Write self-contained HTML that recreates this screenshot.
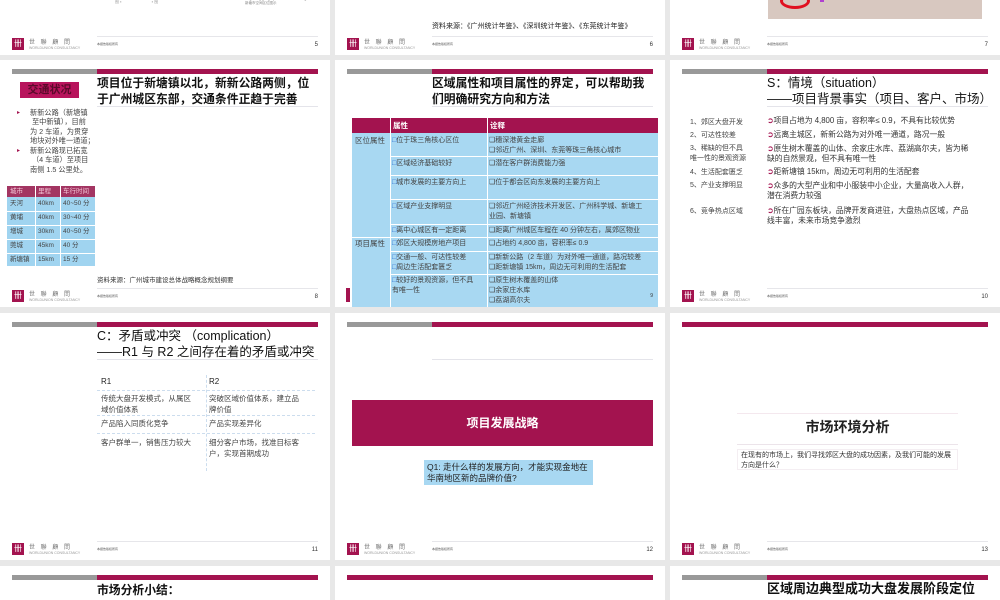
<!DOCTYPE html>
<html><head><meta charset="utf-8"><style>
*{margin:0;padding:0;box-sizing:border-box}
html{width:1000px;height:600px;overflow:hidden}
body{width:1000px;height:600px;background:#e8e8e8;position:relative;overflow:hidden;font-family:"Liberation Sans","Noto Sans CJK SC",sans-serif;color:#222}
.s{position:absolute;width:330px;height:247px;background:#fff;overflow:hidden}
.s>*{position:absolute}
.g{left:12px;top:9px;width:85px;height:5px;background:#999}
.m{left:97px;top:9px;width:221px;height:5px;background:#a3134f}
.mf{left:12px;top:9px;width:306px;height:5px;background:#a3134f}
.t{left:97px;top:15px;font-size:11.8px;font-weight:bold;line-height:16px;white-space:nowrap;color:#111}
.ul{left:97px;top:46px;width:221px;height:1px;background:#e4e4ea}
.fl{left:97px;top:228px;width:221px;height:1px;background:#e6e6ea}
.lg{left:12px;top:230px;width:12px;height:12px;background:#a3134f;color:#fff;font-size:8px;line-height:12px;text-align:center}
.lt{left:29px;top:229px;font-size:6px;color:#777;letter-spacing:2px;white-space:nowrap}
.lt2{left:29px;top:238px;font-size:3.5px;color:#999;white-space:nowrap}
.ft{left:97px;top:234px;font-size:3px;color:#555}
.pn{right:12px;top:234px;font-size:6px;color:#333}
.sm{font-size:7.5px;line-height:10px;white-space:nowrap}
</style></head><body>

<!-- row 1 -->
<div class="s" style="left:0;top:-192px">
<div class="sm" style="left:115px;top:189px;font-size:4px;color:#999">图 ▪ 　　　　　　　 ▪ 图</div>
<div style="left:245px;top:189px;font-size:3.5px;color:#888;line-height:4px">Jingcheng geographical schematic diagram<br>新塘市空间区位图示</div>
<div class="fl"></div><div class="lg">卌</div><div class="lt">世 聯 顧 問</div><div class="lt2">WORLDUNION CONSULTANCY</div><div class="ft">本报告版权所有</div><div class="pn">5</div>
</div>
<div class="s" style="left:335px;top:-192px">
<div class="sm" style="left:97px;top:214px;font-size:7px">资料来源：《广州统计年鉴》、《深圳统计年鉴》、《东莞统计年鉴》</div>
<div class="fl"></div><div class="lg">卌</div><div class="lt">世 聯 顧 問</div><div class="lt2">WORLDUNION CONSULTANCY</div><div class="ft">本报告版权所有</div><div class="pn">6</div>
</div>
<div class="s" style="left:670px;top:-192px">
<div style="left:98px;top:172px;width:214px;height:39px;background:#d8c8c0"></div>
<div style="left:110px;top:185px;width:30px;height:16px;border:3px solid #e01020;border-radius:50%"></div>
<div style="left:150px;top:180px;width:4px;height:14px;background:#b040d0"></div>
<div class="fl"></div><div class="lg">卌</div><div class="lt">世 聯 顧 問</div><div class="lt2">WORLDUNION CONSULTANCY</div><div class="ft">本报告版权所有</div><div class="pn">7</div>
</div>

<!-- row 2 -->
<div class="s" style="left:0;top:60px">
<div class="g"></div><div class="m"></div>
<div class="t">项目位于新塘镇以北，新新公路两侧，位<br>于广州城区东部，交通条件正趋于完善</div>
<div class="ul"></div>
<div style="left:20px;top:22px;width:59px;height:16px;background:#b8145c;color:#5a0a2a;font-size:11px;font-weight:bold;text-align:center;line-height:16px">交通状况</div>
<div style="left:17px;top:49px;font-size:6px;color:#a3134f">▸</div>
<div style="left:17px;top:87px;font-size:6px;color:#a3134f">▸</div>
<div style="left:30px;top:48px;font-size:7.2px;line-height:9.3px;color:#444;white-space:nowrap">新新公路（新塘镇<br>&nbsp;至中新镇），目前<br>为 2 车道，为贯穿<br>地块对外唯一通道；</div>
<div style="left:30px;top:86px;font-size:7.2px;line-height:9.3px;color:#444;white-space:nowrap">新新公路现已拓宽<br>&nbsp;（4 车道）至项目<br>南侧 1.5 公里处。</div>
<div style="left:7px;top:126px;width:88px;height:80px;background:#a0d4f0"></div>
<div style="left:7px;top:126px;width:88px;height:11px;background:#a33562"></div>
<div style="left:35px;top:126px;width:1px;height:80px;background:#fff"></div>
<div style="left:60px;top:126px;width:1px;height:80px;background:#fff"></div>
<div style="left:7px;top:151px;width:88px;height:1px;background:#fff"></div>
<div style="left:7px;top:165px;width:88px;height:1px;background:#fff"></div>
<div style="left:7px;top:179px;width:88px;height:1px;background:#fff"></div>
<div style="left:7px;top:193px;width:88px;height:1px;background:#fff"></div>
<div style="left:10px;top:127px;font-size:6.5px;line-height:14px;color:#444"><span style="color:#f4c8d8;line-height:10px;display:block">城市</span>天河<br>黄埔<br>增城<br>莞城<br>新塘镇</div>
<div style="left:38px;top:127px;font-size:6.5px;line-height:14px;color:#444"><span style="color:#f4c8d8;line-height:10px;display:block">里程</span>40km<br>40km<br>30km<br>45km<br>15km</div>
<div style="left:63px;top:127px;font-size:6.5px;line-height:14px;color:#444"><span style="color:#f4c8d8;line-height:10px;display:block">车行时间</span>40~50 分<br>30~40 分<br>40~50 分<br>40 分<br>15 分</div>
<div class="sm" style="left:97px;top:216px;font-size:6.5px;color:#333">资料来源：广州城市建设总体战略概念规划纲要</div>
<div class="fl"></div><div class="lg">卌</div><div class="lt">世 聯 顧 問</div><div class="lt2">WORLDUNION CONSULTANCY</div><div class="ft">本报告版权所有</div><div class="pn">8</div>
</div>

<div class="s" style="left:335px;top:60px">
<div class="g"></div><div class="m"></div>
<div class="t">区域属性和项目属性的界定，可以帮助我<br>们明确研究方向和方法</div>
<div class="ul"></div>
<div style="left:11px;top:228px;width:4px;height:14px;background:#a3134f"></div>
<div style="left:17px;top:58px;width:306px;height:189px;background:#a8d8f2"></div>
<div style="left:17px;top:58px;width:306px;height:15px;background:#a3134f"></div>
<div style="left:55px;top:58px;width:1px;height:189px;background:#fff"></div>
<div style="left:152px;top:58px;width:1px;height:189px;background:#fff"></div>
<div style="left:17px;top:177px;width:306px;height:1px;background:#fff"></div>
<div style="left:55px;top:96px;width:268px;height:1px;background:#fff"></div>
<div style="left:55px;top:115px;width:268px;height:1px;background:#fff"></div>
<div style="left:55px;top:139px;width:268px;height:1px;background:#fff"></div>
<div style="left:55px;top:164px;width:268px;height:1px;background:#fff"></div>
<div style="left:55px;top:191px;width:268px;height:1px;background:#fff"></div>
<div style="left:55px;top:214px;width:268px;height:1px;background:#fff"></div>
<div class="sm" style="left:58px;top:61px;color:#fff;font-weight:bold">属性</div>
<div class="sm" style="left:155px;top:61px;color:#fff;font-weight:bold">诠释</div>
<div class="sm" style="left:20px;top:76px;color:#444">区位属性</div>
<div class="sm" style="left:20px;top:179px;color:#444">项目属性</div>
<div class="sm" style="left:57px;top:76px;color:#444;font-size:7px"><span style="color:#2060d0">□</span>位于珠三角核心区位</div>
<div class="sm" style="left:57px;top:99px;color:#444;font-size:7px"><span style="color:#2060d0">□</span>区域经济基础较好</div>
<div class="sm" style="left:57px;top:118px;color:#444;font-size:7px"><span style="color:#2060d0">□</span>城市发展的主要方向上</div>
<div class="sm" style="left:57px;top:142px;color:#444;font-size:7px"><span style="color:#2060d0">□</span>区域产业支撑明显</div>
<div class="sm" style="left:57px;top:166px;color:#444;font-size:7px"><span style="color:#2060d0">□</span>离中心城区有一定距离</div>
<div class="sm" style="left:57px;top:179px;color:#444;font-size:7px"><span style="color:#2060d0">□</span>郊区大规模房地产项目</div>
<div class="sm" style="left:57px;top:193px;color:#444;font-size:7px"><span style="color:#2060d0">□</span>交通一般、可达性较差<br><span style="color:#2060d0">□</span>周边生活配套匮乏</div>
<div class="sm" style="left:57px;top:216px;color:#444;font-size:7px"><span style="color:#2060d0">□</span>较好的景观资源，但不具<br>有唯一性</div>
<div class="sm" style="left:154px;top:76px;color:#444;font-size:7px">❑穗深港黄金走廊<br>❑邻近广州、深圳、东莞等珠三角核心城市</div>
<div class="sm" style="left:154px;top:99px;color:#444;font-size:7px">❑潜在客户群消费能力强</div>
<div class="sm" style="left:154px;top:118px;color:#444;font-size:7px">❑位于都会区向东发展的主要方向上</div>
<div class="sm" style="left:154px;top:142px;color:#444;font-size:7px">❑邻近广州经济技术开发区、广州科学城、新塘工<br>业园、新塘镇</div>
<div class="sm" style="left:154px;top:166px;color:#444;font-size:7px">❑距离广州城区车程在 40 分钟左右，属郊区物业</div>
<div class="sm" style="left:154px;top:179px;color:#444;font-size:7px">❑占地约 4,800 亩，容积率≤ 0.9</div>
<div class="sm" style="left:154px;top:193px;color:#444;font-size:7px">❑新新公路（2 车道）为对外唯一通道，路况较差<br>❑距新塘镇 15km，周边无可利用的生活配套</div>
<div class="sm" style="left:154px;top:216px;color:#444;font-size:7px">❑原生树木覆盖的山体<br>❑余家庄水库<br>❑荔湖高尔夫</div>
<div class="pn" style="top:233px;font-size:5px">9</div>
</div>

<div class="s" style="left:670px;top:60px">
<div class="g"></div><div class="m"></div>
<div class="t" style="font-weight:normal;font-size:12.5px">S：情境（situation）<br>——项目背景事实（项目、客户、市场）</div>
<div class="ul"></div>
<div style="left:20px;top:58px;font-size:7px;color:#444;line-height:10px;white-space:nowrap">1、郊区大盘开发</div>
<div style="left:20px;top:71px;font-size:7px;color:#444;line-height:10px;white-space:nowrap">2、可达性较差</div>
<div style="left:20px;top:84px;font-size:7px;color:#444;line-height:10px;white-space:nowrap">3、稀缺的但不具<br>唯一性的景观资源</div>
<div style="left:20px;top:108px;font-size:7px;color:#444;line-height:10px;white-space:nowrap">4、生活配套匮乏</div>
<div style="left:20px;top:121px;font-size:7px;color:#444;line-height:10px;white-space:nowrap">5、产业支撑明显</div>
<div style="left:20px;top:147px;font-size:7px;color:#444;line-height:10px;white-space:nowrap">6、竞争热点区域</div>
<div class="sm" style="left:97px;top:56px;color:#333;font-size:7.8px"><span style="color:#a3134f">➲</span>项目占地为 4,800 亩，容积率≤ 0.9，不具有比较优势</div>
<div class="sm" style="left:97px;top:70px;color:#333;font-size:7.8px"><span style="color:#a3134f">➲</span>远离主城区，新新公路为对外唯一通道，路况一般</div>
<div class="sm" style="left:97px;top:84px;color:#333;font-size:7.8px"><span style="color:#a3134f">➲</span>原生树木覆盖的山体、余家庄水库、荔湖高尔夫，皆为稀<br>缺的自然景观，但不具有唯一性</div>
<div class="sm" style="left:97px;top:107px;color:#333;font-size:7.8px"><span style="color:#a3134f">➲</span>距新塘镇 15km，周边无可利用的生活配套</div>
<div class="sm" style="left:97px;top:121px;color:#333;font-size:7.8px"><span style="color:#a3134f">➲</span>众多的大型产业和中小服装中小企业，大量高收入人群，<br>潜在消费力较强</div>
<div class="sm" style="left:97px;top:146px;color:#333;font-size:7.8px"><span style="color:#a3134f">➲</span>所在广园东板块，品牌开发商进驻，大盘热点区域，产品<br>线丰富，未来市场竞争激烈</div>
<div class="fl"></div><div class="lg">卌</div><div class="lt">世 聯 顧 問</div><div class="lt2">WORLDUNION CONSULTANCY</div><div class="ft">本报告版权所有</div><div class="pn">10</div>
</div>

<!-- row 3 -->
<div class="s" style="left:0;top:313px">
<div class="g"></div><div class="m"></div>
<div class="t" style="font-weight:normal;font-size:12.5px">C：矛盾或冲突 （complication）<br>——R1 与 R2 之间存在着的矛盾或冲突</div>
<div class="ul"></div>
<div style="left:206px;top:62px;width:0;height:96px;border-left:1px dashed #cde"></div>
<div style="left:97px;top:77px;width:218px;border-top:1px dashed #cde"></div>
<div style="left:97px;top:102px;width:218px;border-top:1px dashed #cde"></div>
<div style="left:97px;top:120px;width:218px;border-top:1px dashed #cde"></div>
<div class="sm" style="left:101px;top:64px;font-size:8px;color:#222">R1</div>
<div class="sm" style="left:209px;top:64px;font-size:8px;color:#222">R2</div>
<div class="sm" style="left:101px;top:80px;color:#444;line-height:11px">传统大盘开发模式，从属区<br>域价值体系</div>
<div class="sm" style="left:209px;top:80px;color:#444;line-height:11px">突破区域价值体系，建立品<br>牌价值</div>
<div class="sm" style="left:101px;top:106px;color:#444">产品陷入同质化竞争</div>
<div class="sm" style="left:209px;top:106px;color:#444">产品实现差异化</div>
<div class="sm" style="left:101px;top:124px;color:#444;line-height:11px">客户群单一，销售压力较大</div>
<div class="sm" style="left:209px;top:124px;color:#444;line-height:11px">细分客户市场，找准目标客<br>户，实现首期成功</div>
<div class="fl"></div><div class="lg">卌</div><div class="lt">世 聯 顧 問</div><div class="lt2">WORLDUNION CONSULTANCY</div><div class="ft">本报告版权所有</div><div class="pn">11</div>
</div>

<div class="s" style="left:335px;top:313px">
<div class="g"></div><div class="m"></div>
<div class="ul"></div>
<div style="left:17px;top:87px;width:301px;height:46px;background:#a3134f;color:#fff;font-size:12px;font-weight:bold;text-align:center;line-height:46px">项目发展战略</div>
<div style="left:89px;top:147px;width:169px;height:25px;background:#a8d8f2;font-size:8.5px;line-height:11px;padding:2px 3px;color:#222">Q1: 走什么样的发展方向，才能实现金地在华南地区新的品牌价值?</div>
<div class="fl"></div><div class="lg">卌</div><div class="lt">世 聯 顧 問</div><div class="lt2">WORLDUNION CONSULTANCY</div><div class="ft">本报告版权所有</div><div class="pn">12</div>
</div>

<div class="s" style="left:670px;top:313px">
<div class="mf"></div>
<div style="left:67px;top:100px;width:221px;height:1px;background:#f4e8ee"></div>
<div style="left:67px;top:131px;width:221px;height:1px;background:#ece4ea"></div>
<div style="left:67px;top:104px;width:221px;text-align:center;font-size:14px;font-weight:bold;color:#222">市场环境分析</div>
<div style="left:67px;top:136px;width:221px;height:21px;border:1px solid #f4eef2;font-size:7px;line-height:9.5px;padding:1px 3px;color:#333">在现有的市场上，我们寻找郊区大盘的成功因素，及我们可能的发展方向是什么？</div>
<div class="fl"></div><div class="lg">卌</div><div class="lt">世 聯 顧 問</div><div class="lt2">WORLDUNION CONSULTANCY</div><div class="ft">本报告版权所有</div><div class="pn">13</div>
</div>

<!-- row 4 -->
<div class="s" style="left:0;top:566px;height:34px">
<div class="g"></div><div class="m"></div>
<div class="t" style="top:16px">市场分析小结：</div>
</div>
<div class="s" style="left:335px;top:566px;height:34px">
<div class="mf"></div>
</div>
<div class="s" style="left:670px;top:566px;height:34px">
<div class="g"></div><div class="m"></div>
<div class="t" style="top:15px;font-size:13px">区域周边典型成功大盘发展阶段定位</div>
</div>
</body></html>
